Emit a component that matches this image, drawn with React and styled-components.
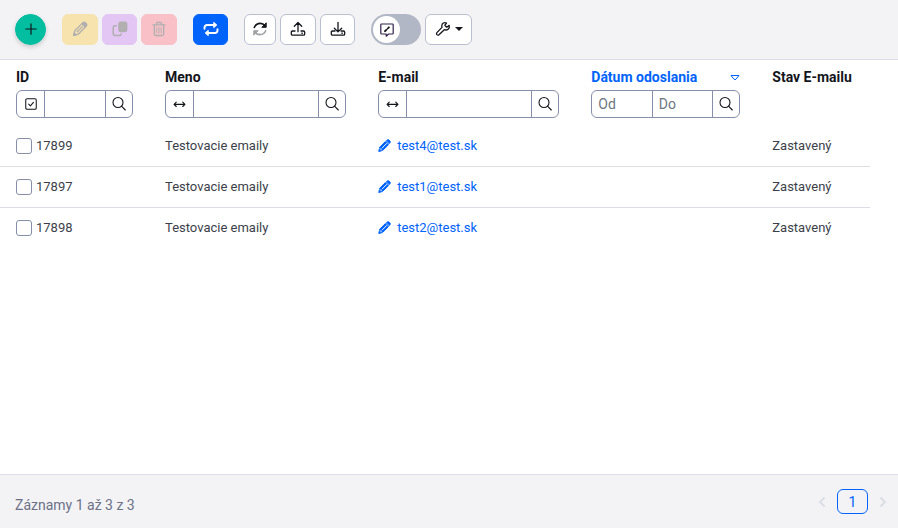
import React from "react";
import styled, { createGlobalStyle } from "styled-components";

const color = {
  blue: "#0063fb",
  text: "#13151b",
  body: "#3c3f49",
  muted: "#6c7186",
  line: "#dcdde7",
  field: "#868eaa",
  button: "#babfce",
  bar: "#f3f3f6",
};

const GlobalStyle = createGlobalStyle`
  *, *::before, *::after { box-sizing: border-box; }
  body { margin: 0; background: #fff; }
  body, button, input { font-family: Roboto, "Noto Sans", sans-serif; }
`;

const Page = styled.div`
  display: flex;
  flex-direction: column;
  min-height: 100vh;
  color: ${color.body};
  font-size: 13px;
`;

const Toolbar = styled.header`
  display: flex;
  align-items: center;
  gap: 16px;
  padding: 14px 15px;
  background: ${color.bar};
  border-bottom: 1px solid ${color.line};
`;

const ButtonGroup = styled.div`
  display: flex;
  gap: 4px;
`;

const ToolButton = styled.button`
  display: flex;
  align-items: center;
  justify-content: center;
  gap: 4px;
  width: ${(p) => p.$width || 36}px;
  height: 31px;
  padding: 0 0 2px;
  border: 1px solid ${(p) => p.$fill || color.button};
  border-radius: 6px;
  background: ${(p) => p.$fill || "#fff"};
  color: ${(p) => p.$ink || color.text};
`;

const AddButton = styled(ToolButton)`
  width: 31px;
  border-radius: 50%;
  box-shadow: 0 2px 4px rgba(19, 21, 27, 0.18);
`;

const Switch = styled.label`
  display: flex;
  align-items: center;
  width: 50px;
  height: 31px;
  padding: 2px;
  border-radius: 16px;
  background: #b2b7c6;
  cursor: pointer;
  &:has(input:checked) { justify-content: flex-end; background: ${color.blue}; }
`;

const HiddenInput = styled.input`
  position: absolute;
  opacity: 0;
  width: 1px;
  height: 1px;
  margin: 0;
`;

const Knob = styled.span`
  display: flex;
  align-items: center;
  justify-content: center;
  width: 27px;
  height: 27px;
  border-radius: 50%;
  background: #fff;
  color: ${color.text};
`;

const Main = styled.main`
  flex: 1;
  padding-right: 28px;
`;

const Table = styled.table`
  width: 100%;
  table-layout: fixed;
  border-collapse: separate;
  border-spacing: 0;
`;

const Col = styled.col`
  width: ${(p) => p.$width};
`;

const HeadCell = styled.th`
  padding: 8px 16px;
  vertical-align: top;
  text-align: left;
  font-size: 14px;
  font-weight: 700;
  line-height: 18px;
  color: ${(p) => (p.$sorted ? color.blue : color.text)};
`;

const HeadLabel = styled.div`
  display: flex;
  align-items: center;
  justify-content: space-between;
  margin-bottom: 4px;
  white-space: nowrap;
`;

const Filter = styled.div`
  display: flex;
  height: 28px;
  border: 1px solid ${color.field};
  border-radius: 6px;
  overflow: hidden;
  background: #fff;
  && > * + * { border-left: 1px solid ${color.field}; }
`;

const FilterButton = styled.button`
  display: flex;
  flex: none;
  align-items: center;
  justify-content: center;
  width: 27px;
  padding: 0 0 1px;
  border: 0;
  background: transparent;
  color: ${color.text};
`;

const FilterInput = styled.input`
  flex: 1;
  min-width: 0;
  width: 0;
  padding: 0 6px;
  border: 0;
  background: transparent;
  color: ${color.text};
  font-size: 14px;
  &::placeholder { color: #6c7580; }
`;

const Cell = styled.td`
  height: 41px;
  padding: 0 16px 1px;
  border-bottom: 1px solid ${color.line};
  white-space: nowrap;
  tr:last-child > & { border-bottom-color: transparent; }
`;

const RowSelect = styled.label`
  display: flex;
  align-items: center;
  gap: 4px;
`;

const Checkbox = styled.input`
  appearance: none;
  width: 16px;
  height: 16px;
  margin: 0;
  border: 1px solid ${color.field};
  border-radius: 3px;
  background: #fff;
  &:checked { background: ${color.blue}; }
`;

const EmailLink = styled.a`
  display: flex;
  align-items: center;
  gap: 6px;
  color: ${color.blue};
  text-decoration: none;
`;

const Footer = styled.footer`
  display: flex;
  align-items: center;
  justify-content: space-between;
  height: 54px;
  padding: 0 11px 0 15px;
  background: ${color.bar};
  border-top: 1px solid ${color.line};
  color: ${color.muted};
`;

const Info = styled.div`
  padding-top: 6px;
  font-size: 14px;
`;

const Pager = styled.nav`
  display: flex;
  align-items: center;
  gap: 11px;
`;

const PageStep = styled.button`
  display: flex;
  padding: 0;
  border: 0;
  background: transparent;
  color: #dadde3;
`;

const PageNumber = styled.button`
  width: 31px;
  height: 25px;
  padding: 0;
  border: 1px solid ${color.blue};
  border-radius: 6px;
  background: transparent;
  color: ${color.blue};
  font-size: 14px;
  line-height: 20px;
`;

const Icon = ({ size = 16, width = 1.2, children }) => (
  <svg width={size} height={size} viewBox="0 0 16 16" fill="none" stroke="currentColor"
    strokeWidth={width} strokeLinecap="round" strokeLinejoin="round" aria-hidden="true">
    {children}
  </svg>
);

const PlusIcon = () => <Icon><path d="M8 2.8v10.4M2.8 8h10.4" /></Icon>;
const PencilIcon = () => (
  <Icon width={1.3}>
    <path d="M1.6 14.4l1.2-4.6L10 2.6 13.4 6l-7.200 7.200zM5.200 10.800l5.200-5.200" />
    <path d="M1.600 14.400l.6-2.400 1.800 1.800z" fill="currentColor" />
    <path d="M10 2.600l1-1q1.200-1 2.300.1l1 1q1 1.200 0 2.300l-1 1z" fill="currentColor" />
  </Icon>
);
const EditIcon = () => (
  <Icon size={13}>
    <path d="M1 15l1.200-5L9 3.200 12.800 7 6 13.800z" fill="currentColor" />
    <path d="M10.500 2l1-.9q1-.7 2 .2l1.200 1.200q1 1 .1 2l-.9 1z" fill="currentColor" />
    <path d="M5 11.200l5.600-5.600M2.600 11.800l1.600 1.600" stroke="#fff" />
  </Icon>
);
const CopyIcon = () => (
  <Icon width={1.5}>
    <rect x="7" y="1.200" width="7.600" height="9.400" rx="1.500" fill="currentColor" />
    <path d="M4.300 4.800H3Q1.200 4.800 1.200 6.600v6Q1.200 14.400 3 14.400h4.600q1.800 0 1.800-1.400" />
  </Icon>
);
const TrashIcon = () => (
  <Icon width={1.3}>
    <path d="M2 3.800h12M5.500 3.800V2.500q0-1 1-1h3q1 0 1 1v1.300M3.300 3.800V13q0 1.500 1.500 1.500h6.400q1.500 0 1.500-1.500V3.800" />
    <path d="M5.800 6.600v5.200M8 6.600v5.200M10.200 6.600v5.200" strokeWidth="0.9" />
  </Icon>
);
const SwapIcon = () => (
  <Icon width={1.9}>
    <path d="M1.500 7.800V6.800q0-2.800 2.800-2.800H11M14.500 8.200v1q0 2.800-2.800 2.800H5" />
    <path d="M11 1.600L13.800 4 11 6.400zM5 9.600L2.200 12 5 14.400z" fill="currentColor" strokeWidth="1" />
  </Icon>
);
const RefreshIcon = () => (
  <Icon width={1.6}>
    <path d="M2.300 6.500Q4 2.400 8.200 2.400q3 0 5 2.700" />
    <path d="M14.200 2.200v4.100h-4z" fill="currentColor" strokeWidth="1" />
    <g stroke="#a0a1a5">
      <path d="M13.700 9.700Q12 13.600 7.800 13.600q-3 0-5-2.700" />
      <path d="M1.800 13.800V9.700h4z" fill="#a0a1a5" strokeWidth="1" />
    </g>
  </Icon>
);
const TrayIcon = ({ down }) => (
  <Icon width={1.3}>
    <path d="M5 10H2.600Q1.300 10 1.300 11.300v1.600q0 1.300 1.300 1.300h10.800q1.300 0 1.300-1.300v-1.600q0-1.300-1.300-1.300H11M11.800 12.200h.6" />
    <path d={down ? "M8 1.300v9.400M4.300 7.200L8 10.900l3.700-3.700" : "M8 10.700V1.500M4.300 5.200L8 1.500l3.700 3.700"} />
  </Icon>
);
const NoteIcon = () => (
  <Icon width={1.2}>
    <path d="M2.600 2h10.800q.8 0 .8.8v8.400q0 .8-.8.8H9.600L7.200 14.200V12H2.600q-.8 0-.8-.8V2.800q0-.8.8-.8z" stroke="#30204a" />
    <path d="M6.200 9l3.200-3.200" width="1.400" />
    <path d="M6 9.200l.8-.8M9.400 5.800l.5-.5" strokeWidth="1.800" />
  </Icon>
);
const WrenchIcon = () => (
  <Icon width={1.3}>
    <path d="M14.200 4.400l-2.500 1.800-1.900-1.800L11.500 2Q8.600 1 7.200 3.200q-.8 1.400-.2 3.200L1.900 11.600q-.9 1 0 2 1 1 2.100.1l5.300-5q2.200.8 3.800-.5Q14.900 6.700 14.200 4.400z" />
  </Icon>
);
const CaretIcon = () => (
  <svg width="8" height="4" viewBox="0 0 8 4" aria-hidden="true"><path d="M0 0h8L4 4z" fill="currentColor" /></svg>
);
const SearchIcon = () => (
  <Icon width={1.1}><circle cx="7" cy="6.500" r="5" /><path d="M10.500 10.200l3.800 3.800" /></Icon>
);
const ArrowsIcon = () => (
  <Icon size={13} width={1.4}><path d="M1.300 9h13.400M4 6.300L1.300 9 4 11.700M12 6.300L14.700 9 12 11.700" /></Icon>
);
const CheckIcon = () => (
  <Icon size={14}><rect x="2" y="2" width="12" height="12" rx="1.500" /><path d="M5.300 8.200l2 1.900 3.500-4" /></Icon>
);
const SortIcon = () => (
  <svg width="10" height="7" viewBox="0 0 10 7" fill="none" stroke="currentColor" strokeLinejoin="round" aria-hidden="true">
    <path d="M1 1.500h8L6 5.200q-1 1-2 0z" />
  </svg>
);
const Chevron = ({ right }) => (
  <svg width="8" height="12" viewBox="0 0 8 12" fill="none" stroke="currentColor" strokeWidth="1.800" aria-hidden="true">
    <path d={right ? "M1.500 1.500L6 6l-4.500 4.500" : "M6.500 1.500L2 6l4.500 4.500"} />
  </svg>
);

const SearchButton = () => (
  <FilterButton type="button" aria-label="Hľadať"><SearchIcon /></FilterButton>
);

const TextFilter = ({ label, icon, iconLabel }) => (
  <Filter>
    <FilterButton type="button" aria-label={iconLabel}>{icon}</FilterButton>
    <FilterInput type="text" aria-label={label} />
    <SearchButton />
  </Filter>
);

const rows = [
  { id: "17899", name: "Testovacie emaily", email: "test4@test.sk", status: "Zastavený" },
  { id: "17897", name: "Testovacie emaily", email: "test1@test.sk", status: "Zastavený" },
  { id: "17898", name: "Testovacie emaily", email: "test2@test.sk", status: "Zastavený" },
];

const disabledInk = "#b1afb0";

export default function App() {
  return (
    <Page>
      <GlobalStyle />
      <Toolbar>
        <AddButton type="button" $fill="#00be9f" aria-label="Pridať"><PlusIcon /></AddButton>
        <ButtonGroup>
          <ToolButton type="button" disabled $fill="#f7e3ae" $ink={disabledInk} aria-label="Upraviť"><PencilIcon /></ToolButton>
          <ToolButton type="button" disabled $width={35} $fill="#e3c6f4" $ink={disabledInk} aria-label="Duplikovať"><CopyIcon /></ToolButton>
          <ToolButton type="button" disabled $fill="#f9c0c7" $ink={disabledInk} aria-label="Vymazať"><TrashIcon /></ToolButton>
        </ButtonGroup>
        <ToolButton type="button" $width={35} $fill={color.blue} $ink="#fff" aria-label="Prepnúť"><SwapIcon /></ToolButton>
        <ButtonGroup>
          <ToolButton type="button" $width={32} aria-label="Obnoviť"><RefreshIcon /></ToolButton>
          <ToolButton type="button" aria-label="Exportovať"><TrayIcon /></ToolButton>
          <ToolButton type="button" $width={35} aria-label="Importovať"><TrayIcon down /></ToolButton>
        </ButtonGroup>
        <ButtonGroup>
          <Switch>
            <HiddenInput type="checkbox" role="switch" aria-label="Úprava bunky" />
            <Knob><NoteIcon /></Knob>
          </Switch>
          <ToolButton type="button" $width={47} aria-label="Nastavenia"><WrenchIcon /><CaretIcon /></ToolButton>
        </ButtonGroup>
      </Toolbar>

      <Main>
        <Table>
          <colgroup>
            <Col $width="149px" />
            <Col $width="24.5%" />
            <Col $width="24.5%" />
            <Col $width="181px" />
            <Col />
          </colgroup>
          <thead>
            <tr>
              <HeadCell scope="col">
                <HeadLabel>ID</HeadLabel>
                <TextFilter label="ID" icon={<CheckIcon />} iconLabel="Označiť všetko" />
              </HeadCell>
              <HeadCell scope="col">
                <HeadLabel>Meno</HeadLabel>
                <TextFilter label="Meno" icon={<ArrowsIcon />} iconLabel="Obsahuje" />
              </HeadCell>
              <HeadCell scope="col">
                <HeadLabel>E-mail</HeadLabel>
                <TextFilter label="E-mail" icon={<ArrowsIcon />} iconLabel="Obsahuje" />
              </HeadCell>
              <HeadCell scope="col" $sorted aria-sort="descending">
                <HeadLabel>Dátum odoslania<SortIcon /></HeadLabel>
                <Filter>
                  <FilterInput type="text" placeholder="Od" aria-label="Dátum od" />
                  <FilterInput type="text" placeholder="Do" aria-label="Dátum do" />
                  <SearchButton />
                </Filter>
              </HeadCell>
              <HeadCell scope="col"><HeadLabel>Stav E-mailu</HeadLabel></HeadCell>
            </tr>
          </thead>
          <tbody>
            {rows.map((row) => (
              <tr key={row.id}>
                <Cell><RowSelect><Checkbox type="checkbox" />{row.id}</RowSelect></Cell>
                <Cell>{row.name}</Cell>
                <Cell><EmailLink href={`#${row.id}`}><EditIcon />{row.email}</EmailLink></Cell>
                <Cell />
                <Cell>{row.status}</Cell>
              </tr>
            ))}
          </tbody>
        </Table>
      </Main>

      <Footer>
        <Info>Záznamy 1 až 3 z 3</Info>
        <Pager aria-label="Stránkovanie">
          <PageStep type="button" disabled aria-label="Predchádzajúca"><Chevron /></PageStep>
          <PageNumber type="button" aria-current="page">1</PageNumber>
          <PageStep type="button" disabled aria-label="Nasledujúca"><Chevron right /></PageStep>
        </Pager>
      </Footer>
    </Page>
  );
}
